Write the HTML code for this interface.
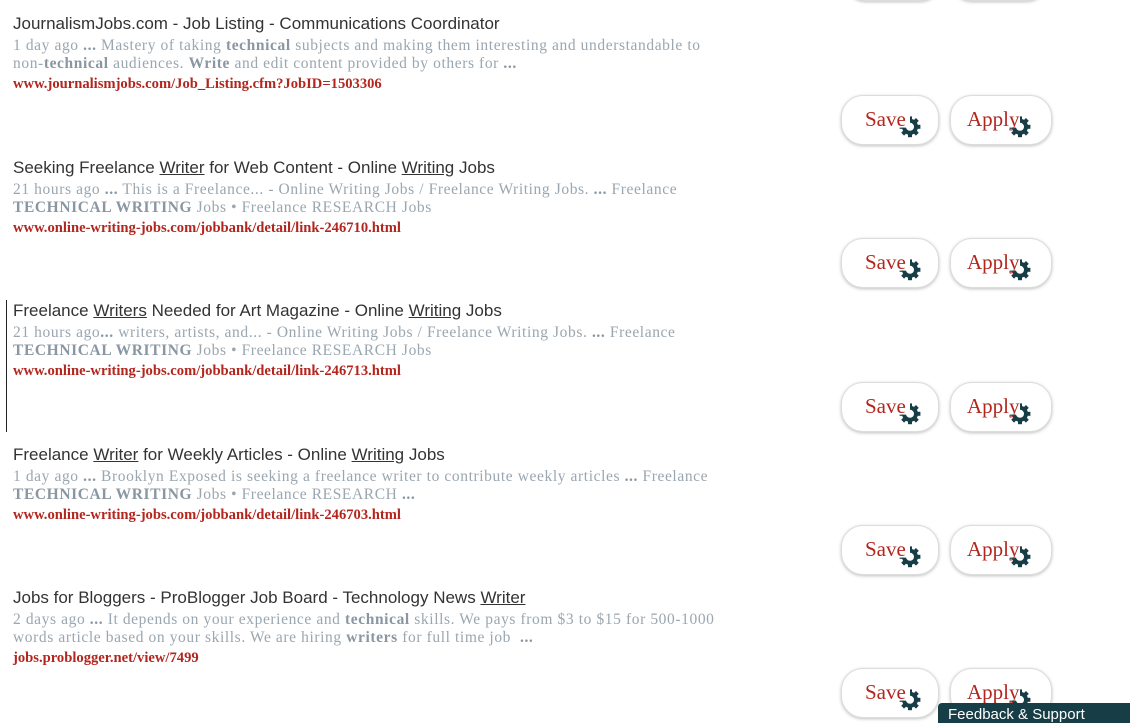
<!DOCTYPE html>
<html><head><meta charset="utf-8"><style>
body{margin:0;width:1130px;height:719px;background:#fff;overflow:hidden;position:relative;font-family:"Liberation Sans",sans-serif}
.it{position:absolute;left:13px;width:760px}
.t{font-size:17px;color:#333;line-height:20px;height:20px;white-space:nowrap}
.t u{text-decoration:underline}
.s{font-family:"Liberation Serif",serif;font-size:15.5px;letter-spacing:0.6px;color:#9aa6b0;line-height:18px;margin-top:3px;white-space:nowrap}
.s b{color:#8a97a2}
.u{font-family:"Liberation Serif",serif;font-weight:bold;font-size:14.6px;color:#b3261e;line-height:18px;margin-top:2px;white-space:nowrap}
.btn{position:absolute;width:96px;height:48px;border-radius:22px;border:1px solid #ddd;box-shadow:0 1px 3px rgba(0,0,0,.25);background:#fff;font-family:"Liberation Serif",serif;font-size:21px;color:#b3261e}
.btn span{position:absolute;top:11px;left:23px;z-index:2}
.gw{position:absolute;z-index:1;width:24px;height:24px}
.gw svg{display:block}
.fb{position:absolute;left:938px;top:703px;width:192px;height:20px;background:#173d47;border-radius:4px 0 0 0;color:#fff;font-size:15px;padding-left:10px;line-height:24px;box-sizing:border-box;z-index:5}
</style></head><body>
<div style="position:absolute;left:6px;top:300px;width:1px;height:132px;background:#222"></div>

<div class="btn" style="left:844px;top:-49px"></div><div class="btn" style="left:950px;top:-49px"></div>

<div class="it" style="top:14px"><div class="t">JournalismJobs.com - Job Listing - Communications Coordinator</div>
<div class="s">1 day ago <b>...</b> Mastery of taking <b>technical</b> subjects and making them interesting and understandable to<br>non-<b>technical</b> audiences. <b>Write</b> and edit content provided by others for <b>...</b></div>
<div class="u">www.journalismjobs.com/Job_Listing.cfm?JobID=1503306</div></div>

<div class="it" style="top:158px"><div class="t">Seeking Freelance <u>Writer</u> for Web Content - Online <u>Writing</u> Jobs</div>
<div class="s">21 hours ago <b>...</b> This is a Freelance... - Online Writing Jobs / Freelance Writing Jobs. <b>...</b> Freelance<br><b>TECHNICAL WRITING</b> Jobs • Freelance RESEARCH Jobs</div>
<div class="u">www.online-writing-jobs.com/jobbank/detail/link-246710.html</div></div>

<div class="it" style="top:301px"><div class="t">Freelance <u>Writers</u> Needed for Art Magazine - Online <u>Writing</u> Jobs</div>
<div class="s">21 hours ago<b>...</b> writers, artists, and... - Online Writing Jobs / Freelance Writing Jobs. <b>...</b> Freelance<br><b>TECHNICAL WRITING</b> Jobs • Freelance RESEARCH Jobs</div>
<div class="u">www.online-writing-jobs.com/jobbank/detail/link-246713.html</div></div>

<div class="it" style="top:445px"><div class="t">Freelance <u>Writer</u> for Weekly Articles - Online <u>Writing</u> Jobs</div>
<div class="s">1 day ago <b>...</b> Brooklyn Exposed is seeking a freelance writer to contribute weekly articles <b>...</b> Freelance<br><b>TECHNICAL WRITING</b> Jobs • Freelance RESEARCH <b>...</b></div>
<div class="u">www.online-writing-jobs.com/jobbank/detail/link-246703.html</div></div>

<div class="it" style="top:588px"><div class="t">Jobs for Bloggers - ProBlogger Job Board - Technology News <u>Writer</u></div>
<div class="s">2 days ago <b>...</b> It depends on your experience and <b>technical</b> skills. We pays from $3 to $15 for 500-1000<br>words article based on your skills. We are hiring <b>writers</b> for full time job &nbsp;<b>...</b></div>
<div class="u">jobs.problogger.net/view/7499</div></div>

<script>
var g='<svg width="24" height="24" viewBox="0 0 30 30"><defs><clipPath id="c"><polygon points="15,0 30,0 30,30 0,30 0,17 15,17"/></clipPath></defs><g clip-path="url(#c)" fill="#173d47"><circle cx="15" cy="16" r="7.5" fill="none" stroke="#173d47" stroke-width="5"/>';
for(var a=0;a<360;a+=45){g+='<rect x="12.5" y="3" width="5" height="5" transform="rotate('+a+' 15 16)"/>';}
g+='</g></svg>';
var tops=[95,238,382,525,668];
var h='';
tops.forEach(function(t){
 h+='<div class="btn" style="left:841px;top:'+t+'px"><span>Save</span><div class="gw" style="left:56px;top:18px">'+g+'</div></div>';
 h+='<div class="btn" style="left:950px;top:'+t+'px;width:100px"><span style="left:16px">Apply</span><div class="gw" style="left:57px;top:18px">'+g+'</div></div>';
});
document.body.insertAdjacentHTML('beforeend',h);
</script>
<div class="fb">Feedback &amp; Support</div>
</body></html>
